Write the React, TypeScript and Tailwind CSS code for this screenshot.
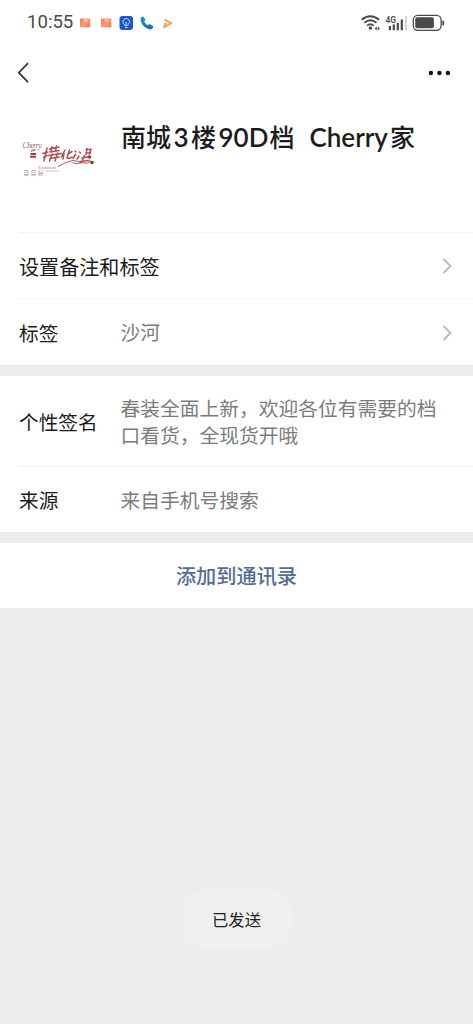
import type { ReactNode } from 'react';

const StatusBar = () => (
  <div className="flex h-[45px] items-center justify-between pl-[27px] pr-[28px] text-[#4a4a4a]">
    <div className="flex items-center">
      <span className="w-[53px] whitespace-nowrap font-['Roboto',sans-serif] text-[18.6px] leading-none">10:55</span>
      <svg width="100" height="18" viewBox="80 13 100 18">
        <defs>
          <linearGradient id="card" x1="0" y1="0" x2="1" y2="1">
            <stop offset="0" stopColor="#f07a68" />
            <stop offset="0.55" stopColor="#fa9a70" />
            <stop offset="1" stopColor="#f0685c" />
          </linearGradient>
          <linearGradient id="call" x1="0" y1="0" x2="1" y2="1">
            <stop offset="0" stopColor="#1aa3b0" />
            <stop offset="1" stopColor="#1466a8" />
          </linearGradient>
        </defs>
        {[80, 101].map((x) => (
          <g key={x}>
            <rect x={x} y="17.5" width="10.3" height="8.8" rx="1" fill="url(#card)" />
            <path d={`M${x + 3.5} 17.5v2.5q2 1.5 4 0v-2.5z`} fill="#fdc594" />
          </g>
        ))}
        <rect x="119.5" y="15" width="13.5" height="14" rx="3" fill="#1a55cf" />
        <path d="M124.800 24.600v-.8a3.300 3.300 0 1 1 2.900 0v.8z" fill="none" stroke="#c9dcff" strokeWidth="1" />
        <path d="M126.200 21v3M125 26.500h2.500" stroke="#dce8ff" strokeWidth="1" />
        <path
          d="M141.200 16.200l2-.7 2.300 3.300-1.300 1.700q1.200 2.300 3.600 3.700l1.700-1.100 3.800 2.500-1 2.200q-2.200 1.500-5.600-.5-5.600-3.300-6.200-8.600-.1-1.600.7-2.500z"
          fill="url(#call)"
        />
        <path d="M164.500 18.500l6.800 3.600-7.300 4 1.800-4.500" fill="none" stroke="#f3a355" strokeWidth="1.900" strokeLinejoin="round" />
      </svg>
    </div>
    <svg width="84" height="18" viewBox="361 13 84 18" fill="none" stroke="#4a4a4a">
      <path d="M361.600 18.700q8.600-7 17.500 0" strokeWidth="2" />
      <path d="M364.300 21.800q6.100-5 12.200 0" strokeWidth="1.900" />
      <path d="M367 24.600q3.400-2.800 6.800 0" strokeWidth="1.800" />
      <circle cx="370.400" cy="27" r="1.800" fill="#4a4a4a" stroke="none" />
      <path d="M374.500 27.500l2.300-1.900v3.800zM380 27.500l-2.300-1.900v3.800z" fill="#4a4a4a" stroke="none" />
      <text x="385.500" y="21.800" fill="#4a4a4a" stroke="none" fontSize="9" fontWeight="600" fontFamily="Roboto, sans-serif" textLength="10.5" lengthAdjust="spacingAndGlyphs">4G</text>
      <path d="M389.900 25v4.300M393.800 23.500v5.800M397.800 22v7.300M401.800 18.500v10.800" strokeWidth="2.200" />
      <path d="M406 15v14.300" stroke="#d2d2d2" strokeWidth="2" />
      <rect x="413.300" y="14.300" width="27.800" height="15" rx="4.500" strokeWidth="1.300" />
      <rect x="415.200" y="16.300" width="18.700" height="11" rx="2" fill="#4a4a4a" stroke="none" />
      <path d="M443.200 19.700v4.600" strokeWidth="1.800" />
    </svg>
  </div>
);

const NavBar = () => (
  <div className="flex h-[56px] items-center justify-between pl-[17px] pr-[22px]">
    <svg width="12" height="22" viewBox="0 0 12 22" fill="none" stroke="#333" strokeWidth="1.700">
      <path d="M11 1.200L1.800 10.700l9.200 9.500" />
    </svg>
    <svg width="23" height="6" viewBox="0 0 23 6" fill="#111">
      <circle cx="2.900" cy="3" r="2.200" />
      <circle cx="11.400" cy="3" r="2.200" />
      <circle cx="19.900" cy="3" r="2.200" />
    </svg>
  </div>
);

const Avatar = () => (
  <svg className="mt-[19px] shrink-0" width="80" height="76" viewBox="20 120 80 76" fill="none">
    <text x="22.5" y="147.800" fontSize="8" fontStyle="italic" fill="#b06a6e" fontFamily="Liberation Serif, serif" textLength="20">Cherry.</text>
    <path d="M31 151l4.500-1.500" stroke="#5b9b69" strokeWidth="1.500" />
    <path d="M30.500 154h5.500M30 156.700h6" stroke="#ad3943" strokeWidth="2" />
    {/* brush lettering */}
    <g stroke="#a93c48" strokeWidth="1.500" strokeLinecap="round" opacity="0.9">
      <path d="M43 153.500l5-1.500M47 148l-3 13M43.500 157.500l3.500-2M49.500 149l9.500-2M52 146.500l-1 5M56.500 146l-1 5M50 152l9-1.500M48.500 155.500l13-2M52 154l-2.500 7M57.500 153l-2.500 8M50 158.500l9-1.500" />
      <path d="M65 150l-3.500 7M64 153l-1 6M69.500 150l-2.500 8M68 154l4-2.500M67 158q3 1 5-1M75 151l1 1M75.500 154.500l-2.500 4" />
      <path d="M86 149.500h5M86 153h4.500M87 148.500l-1 6M91 149l-1.500 5M79.500 152l1 1M79 156l-2 3M82 158l7-1.500M84.500 155.500l-2 4.500M80 161.500l9-1" />
      <path d="M73 163q5 2 9-1 4 3 9-1" strokeWidth="1" />
    </g>
    <path d="M58 166.500q8-5 15-6 5 0 9 3" stroke="#765b61" strokeWidth="0.900" />
    <circle cx="89.500" cy="157" r="1.800" fill="#a93444" />
    <circle cx="92" cy="162.500" r="1.800" fill="#78434d" />
    <text x="38" y="168.500" fontSize="4" fill="#a58b8d" fontFamily="Liberation Serif, serif" textLength="18">Recommend</text>
    <text x="23.500" y="174.500" fontSize="5.500" fill="#9a7377" fontFamily="'Noto Sans CJK SC', sans-serif" textLength="20">自自好</text>
    <path d="M46 171h12.500" stroke="#c9b5b5" strokeWidth="0.900" />
  </svg>
);

const Chevron = () => (
  <svg className="ml-auto mr-[20px]" width="12" height="18" viewBox="0 0 12 18" fill="none" stroke="#b8b8b8" strokeWidth="1.800">
    <path d="M2.500 2l7 7-7 7" />
  </svg>
);

interface RowProps {
  label: string;
  children?: ReactNode;
  arrow?: boolean;
  className: string;
}

const Row = ({ label, children, arrow, className }: RowProps) => (
  <div className={`ml-[19px] flex items-center ${className}`}>
    <span className={`shrink-0 whitespace-nowrap text-[#1c1c1c] ${children ? 'w-[101.5px] text-[19.7px]' : 'pt-[2px] text-[20.1px]'}`}>{label}</span>
    {children && <div className="text-[19.75px] leading-[26.5px] text-[#7c7c7c]">{children}</div>}
    {arrow && <Chevron />}
  </div>
);

export default function App() {
  return (
    <div className="flex h-screen w-full flex-col overflow-hidden bg-[#ededed] font-['Noto_Sans_CJK_SC',sans-serif]">
      <div className="h-[365px] bg-white">
        <StatusBar />
        <NavBar />
        <div className="flex h-[131px] pl-[20px]">
          <Avatar />
          <h1 className="ml-[21px] mt-[17px] flex items-baseline whitespace-pre text-[25px] font-medium leading-[36px] text-[#1c1c1c]">
            <span className="w-[52.5px]">南城</span>
            <span className="w-[17.5px] font-['Lato'] text-[26px] font-semibold">3</span>
            <span className="w-[27.5px]">楼</span>
            <span className="w-[51px] font-['Lato'] text-[26px] font-semibold">90D</span>
            <span className="w-[40px]">档  </span>
            <span className="w-[80.5px] font-['Lato'] text-[26px] font-semibold">Cherry</span>
            <span>家</span>
          </h1>
        </div>
        <Row label="设置备注和标签" arrow className="h-[66px] border-t border-[#f4f4f4] pt-px" />
        <Row label="标签" arrow className="h-[67px] border-t border-[#f4f4f4] pt-px">沙河</Row>
      </div>
      <div className="mt-[11px] h-[156px] bg-white">
        <Row label="个性签名" className="h-[90px] pt-px">
          <p>春装全面上新，欢迎各位有需要的档</p>
          <p>口看货，全现货开哦</p>
        </Row>
        <Row label="来源" className="h-[66px] border-t border-[#eeeeee] pt-px">来自手机号搜索</Row>
      </div>
      <button className="mt-[11px] h-[65px] bg-white pt-[2px] text-[20.2px] font-medium text-[#576b95]">添加到通讯录</button>
      <div className="mx-auto mt-[282px] flex h-[58px] w-[110px] items-center justify-center rounded-[24px] bg-[#efefef] text-[16.3px] text-[#222]">
        已发送
      </div>
    </div>
  );
}
